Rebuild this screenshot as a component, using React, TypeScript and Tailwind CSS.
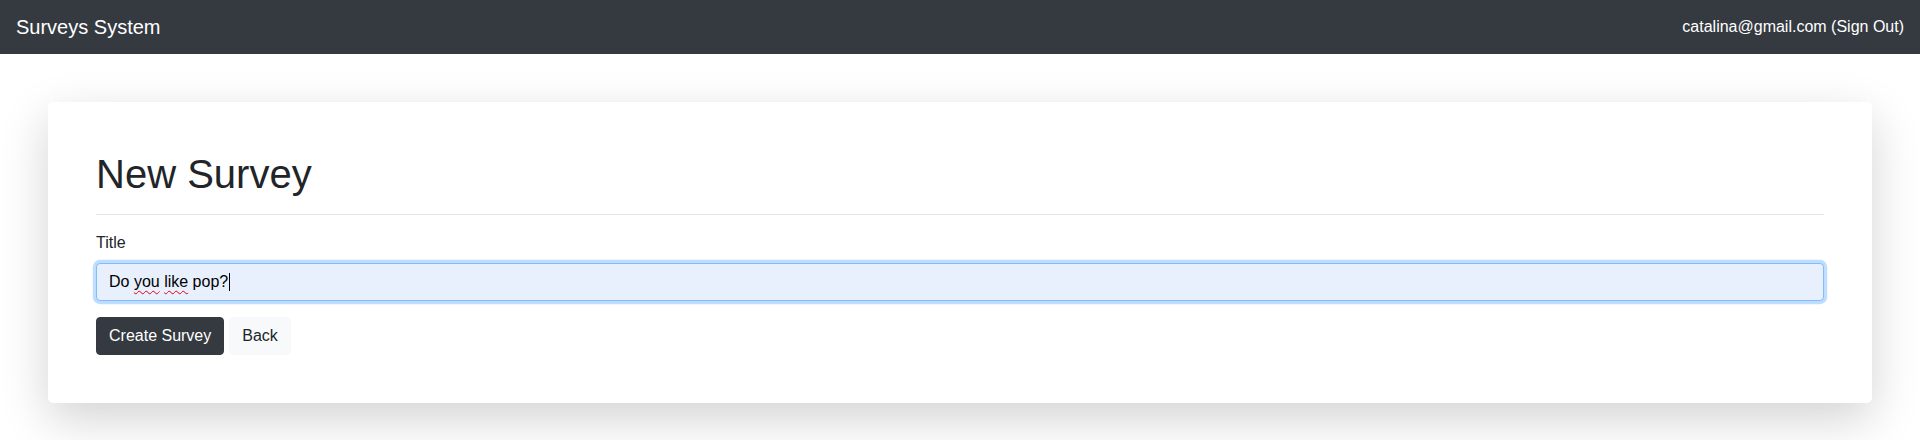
export default function App() {
	return (
		<div className="min-h-[440px] bg-white font-['Liberation_Sans',Arial,sans-serif] text-[#212529]">
			<nav className="flex h-[54px] items-center justify-between bg-[#343a40] px-4">
				<span className="text-[20px] leading-[30px] text-white">Surveys System</span>
				<span className="text-[16px] leading-6 text-white">catalina@gmail.com (Sign Out)</span>
			</nav>

			<main className="px-12 pt-12">
				<div className="rounded-[5px] bg-white p-12 shadow-[0_1rem_3rem_rgba(0,0,0,0.175)]">
					<h1 className="text-[40px] leading-[48px] font-normal">New Survey</h1>
					<hr className="my-4 border-t border-[rgba(0,0,0,0.1)]" />

					<div className="mb-4">
						<label className="mb-2 block text-[16px] leading-6">Title</label>
						<div
							role="textbox"
							className="flex h-[38px] items-center rounded-[4px] border border-[#80bdff] bg-[#e8f0fe] px-3 text-[16px] leading-6 text-black shadow-[0_0_0_3.2px_rgba(0,123,255,0.25)]"
						>
							<span>
								Do <span className="underline decoration-red-600 decoration-wavy decoration-1 underline-offset-[3px]">you</span>{" "}
								<span className="underline decoration-red-600 decoration-wavy decoration-1 underline-offset-[3px]">like</span> pop?
							</span>
							<span className="ml-px inline-block h-[18px] w-px bg-black" />
						</div>
					</div>

					<div className="flex gap-[5px]">
						<button className="h-[38px] rounded-[4px] border border-[#343a40] bg-[#343a40] px-3 text-[16px] leading-6 text-white">
							Create Survey
						</button>
						<button className="h-[38px] rounded-[4px] border border-[#f8f9fa] bg-[#f8f9fa] px-3 text-[16px] leading-6 text-[#212529]">
							Back
						</button>
					</div>
				</div>
			</main>
		</div>
	);
}
